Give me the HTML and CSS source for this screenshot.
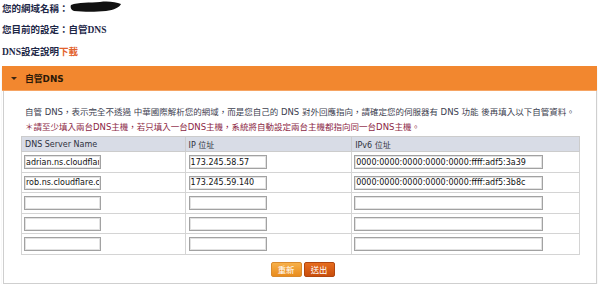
FILE: index.html
```html
<!DOCTYPE html>
<html lang="zh-Hant">
<head>
    <meta charset="UTF-8">
    <title>自管DNS設定</title>
    <link rel="stylesheet" href="styles.css">
</head>
<body>
    <div class="info">
        <p>您的網域名稱：<svg class="redact" width="52" height="12" viewBox="0 0 52 12"><path d="M1 4 C8 1 20 2 30 1 C38 0 46 1 51 3 C50 6 44 9 36 10 C26 11 14 11 4 10 C1 9 0 6 1 4 Z" fill="#111"/></svg></p>
        <p>您目前的設定：自管DNS</p>
        <p>DNS設定說明<a class="dl" href="#">下載</a></p>
    </div>

    <div class="panel">
        <div class="panel-head">
            <span class="caret"></span>
            <span class="panel-title">自管DNS</span>
        </div>
        <div class="panel-body">
            <div class="desc">
                <p>自管 DNS，表示完全不透過 中華國際解析您的網域，而是您自己的 DNS 對外回應指向，請確定您的伺服器有 DNS 功能 後再填入以下自管資料。</p>
                <p class="warn">＊請至少填入兩台DNS主機，若只填入一台DNS主機，系統將自動設定兩台主機都指向同一台DNS主機。</p>
            </div>

            <table class="dns-table">
                <tr>
                    <th class="c1">DNS Server Name</th>
                    <th class="c2">IP 位址</th>
                    <th class="c3">IPv6 位址</th>
                </tr>
                <tr>
                    <td><input class="name" type="text" value="adrian.ns.cloudflare.com"></td>
                    <td><input class="ip" type="text" value="173.245.58.57"></td>
                    <td><input class="ip6" type="text" value="0000:0000:0000:0000:0000:ffff:adf5:3a39"></td>
                </tr>
                <tr>
                    <td><input class="name" type="text" value="rob.ns.cloudflare.com"></td>
                    <td><input class="ip" type="text" value="173.245.59.140"></td>
                    <td><input class="ip6" type="text" value="0000:0000:0000:0000:0000:ffff:adf5:3b8c"></td>
                </tr>
                <tr>
                    <td><input class="name" type="text"></td>
                    <td><input class="ip" type="text"></td>
                    <td><input class="ip6" type="text"></td>
                </tr>
                <tr>
                    <td><input class="name" type="text"></td>
                    <td><input class="ip" type="text"></td>
                    <td><input class="ip6" type="text"></td>
                </tr>
                <tr>
                    <td><input class="name" type="text"></td>
                    <td><input class="ip" type="text"></td>
                    <td><input class="ip6" type="text"></td>
                </tr>
            </table>

            <div class="actions">
                <button class="btn btn-reset">重新</button>
                <button class="btn btn-submit">送出</button>
            </div>
        </div>
    </div>
</body>
</html>
```

FILE: styles.css
```css
* {
    box-sizing: border-box;
    margin: 0;
    padding: 0;
}

body {
    background: #ffffff;
    font-family: 'DejaVu Sans', 'Noto Sans CJK TC', sans-serif;
    color: #333;
}

.info {
    margin-top: -1.5px;
    padding-left: 2px;
    font-family: 'Liberation Serif', 'Noto Sans CJK TC', serif;
    font-size: 9.5px;
    font-weight: bold;
    color: #1d2747;
    line-height: 21.5px;
}

.info p {
    display: flex;
    align-items: center;
}

.redact {
    margin-left: 1px;
    margin-top: -4px;
}

.dl {
    color: #e2622c;
    text-decoration: none;
}

.panel {
    margin: 3px 3px 0 2px;
    box-shadow: 0 2px 1px #dcdcdc;
}

.panel-head {
    height: 25px;
    background: #f2872f;
    border-bottom: 1px solid #f6a463;
    display: flex;
    align-items: center;
    padding-left: 9px;
}

.caret {
    width: 0;
    height: 0;
    border-left: 3px solid transparent;
    border-right: 3px solid transparent;
    border-top: 3px solid #3a2512;
    margin-right: 8px;
}

.panel-title {
    font-family: 'DejaVu Sans', 'Noto Sans CJK TC', sans-serif;
    font-size: 8.8px;
    font-weight: bold;
    color: #2b1808;
}

.panel-body {
    border: 1px solid #cfcfcf;
    border-top: none;
    margin-left: 1px;
    padding: 14px 16px 6px 17px;
}

.desc {
    padding-left: 4px;
    font-size: 8.5px;
    line-height: 14.5px;
    color: #3d4150;
    margin-bottom: 2px;
    white-space: nowrap;
}

.desc .warn {
    color: #8c1f45;
}

.dns-table {
    width: 559px;
    border-collapse: collapse;
    border: 1px solid #cccccc;
}

.dns-table th {
    height: 15px;
    background: #d8dce6;
    text-align: left;
    font-weight: normal;
    font-size: 8px;
    color: #2f3240;
    padding: 0 0 0 3px;
    border: 1px solid #cccccc;
}

.dns-table .c1 { width: 164px; }
.dns-table .c2 { width: 167px; }
.dns-table .c3 { width: 228px; }

.dns-table td {
    padding: 3px 0 2.6px 2px;
    border: 1px solid #d4d4d4;
    line-height: 0;
}

.dns-table input {
    height: 14px;
    border: 1px solid #a2a2a2;
    box-shadow: inset 0 0 0 1px #e2e2e2;
    font-family: 'DejaVu Sans', sans-serif;
    font-size: 8px;
    color: #111;
    padding: 0 1px;
    background: #fff;
    outline: none;
}

.dns-table input.name { width: 77px; }
.dns-table input.ip { width: 78px; margin-left: 1px; }
.dns-table input.ip6 { width: 189px; }

.actions {
    display: flex;
    justify-content: center;
    gap: 2px;
    margin-top: 7px;
    padding-left: 4px;
}

.btn {
    width: 31px;
    height: 15px;
    border-radius: 2px;
    color: #fff;
    font-family: 'Noto Sans CJK TC', sans-serif;
    font-size: 8.4px;
    line-height: 13px;
    cursor: pointer;
}

.btn-reset {
    background: linear-gradient(#f7b04a, #e98c1c);
    border: 1px solid #d88a2e;
}

.btn-submit {
    background: linear-gradient(#e66c1e, #c94e0c);
    border: 1px solid #b04610;
}
```
